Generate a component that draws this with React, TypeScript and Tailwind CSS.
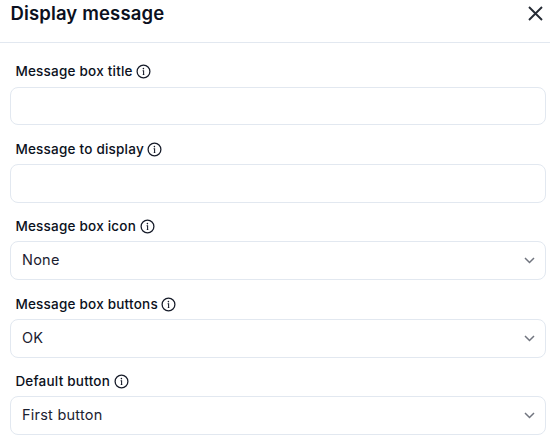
import React from "react";

function InfoIcon() {
  return (
    <svg className="size-[15px] shrink-0" viewBox="0 0 15 15" fill="none">
      <circle cx="7.5" cy="7.5" r="6.4" stroke="#151a28" strokeWidth="1.25" />
      <path d="M6.6 6.7h1v3.9M6.8 10.5h1.5" stroke="#151a28" strokeWidth="1.05" />
      <circle cx="7.4" cy="4.6" r="0.8" fill="#151a28" />
    </svg>
  );
}

type FieldProps = { label: string; value?: string };

function Field({ label, value }: FieldProps) {
  return (
    <div className="flex h-[77.4px] shrink-0 flex-col">
      <div className="flex h-[24.2px] shrink-0 items-start gap-[3.5px] pl-[5.4px] text-[13.5px] leading-[18px] font-medium tracking-[0.22px] text-[#0b1020]">
        <span className="whitespace-nowrap">{label}</span>
        <span className="flex h-[19px] items-center"><InfoIcon /></span>
      </div>
      {value ? (
        <button type="button" className="flex h-[38.9px] items-center justify-between rounded-lg border border-[#e2e8f0] pr-[10px] pl-[11px] text-[14.5px] tracking-[0.23px] text-[#1b2130]">
          <span className="pb-[1.2px]">{value}</span>
          <svg className="h-[7px] w-[11px]" viewBox="0 0 11 7" fill="none">
            <path d="M1 1l4.5 4.5L10 1" stroke="#71757f" strokeWidth="1.5" />
          </svg>
        </button>
      ) : (
        <input
          aria-label={label}
          className="h-[38.7px] rounded-lg border border-[#e2e8f0] bg-white px-3 text-sm outline-none"
        />
      )}
    </div>
  );
}

export default function App() {
  return (
    <main className="h-[441px] w-[550px] overflow-hidden bg-white font-['Inter',sans-serif]">
      <header className="flex h-[43px] items-start justify-between border-b border-[#e2e8f0] pr-[7px] pl-[10.4px]">
        <h1 className="text-[18.5px] leading-[27px] font-semibold tracking-[0.15px] text-[#0b1020]">Display message</h1>
        <button aria-label="Close" className="mt-[5.5px]">
          <svg className="size-[15px]" viewBox="0 0 15 15" fill="none">
            <path d="M1 1l13 13M14 1L1 14" stroke="#252b35" strokeWidth="1.9" />
          </svg>
        </button>
      </header>
      <form className="flex flex-col pt-[19.4px] pr-1 pl-[10px]">
        <Field label="Message box title" />
        <Field label="Message to display" />
        <Field label="Message box icon" value="None" />
        <Field label="Message box buttons" value="OK" />
        <Field label="Default button" value="First button" />
      </form>
    </main>
  );
}
